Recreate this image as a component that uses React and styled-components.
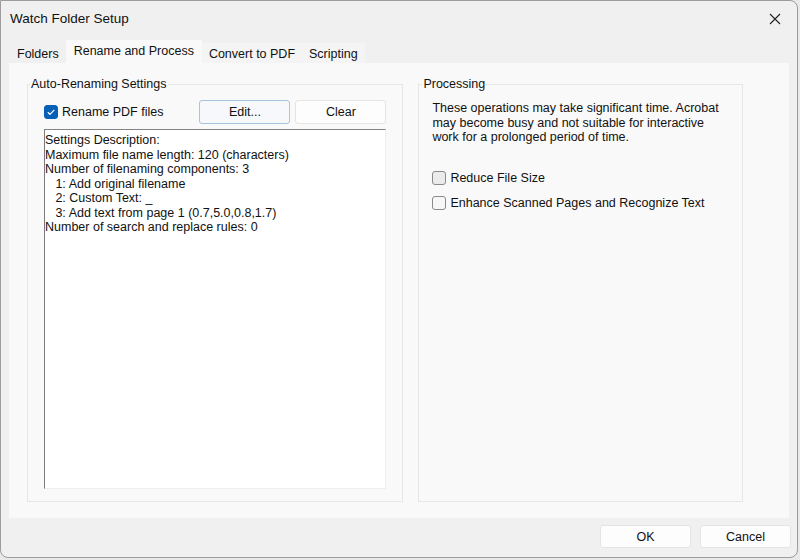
import React from 'react';
import styled, { createGlobalStyle } from 'styled-components';

const GlobalStyle = createGlobalStyle`
  html, body { margin: 0; padding: 0; background: #e9e9e9; }
  body { font-family: "Liberation Sans", Arial, sans-serif; color: #111; }
  * { box-sizing: border-box; }
`;

const Window = styled.div`
  width: 798px;
  height: 558px;
  background: #f0f0f0;
  border: 1px solid #9c9c9c;
  border-radius: 0 8px 8px 8px;
  display: flex;
  flex-direction: column;
  overflow: hidden;
`;

const TitleBar = styled.div`
  height: 39px;
  display: flex;
  align-items: center;
  justify-content: space-between;
  padding: 0 10px 4px 9px;
  font-size: 13.5px;
`;

const CloseButton = styled.div`
  width: 20px;
  height: 20px;
  display: flex;
  align-items: center;
  justify-content: center;
  margin-right: 2px;
`;

const TabStrip = styled.div`
  display: flex;
  align-items: flex-end;
  height: 23px;
  padding-left: 9px;
`;

const Tab = styled.div`
  height: ${p => (p.$active ? '23px' : '20px')};
  padding: ${p => (p.$active ? '4px 8px 0' : '4px 7px 0')};
  font-size: 12.5px;
  line-height: 14px;
  background: ${p => (p.$active ? '#f9f9f9' : p.$light ? '#f4f4f4' : '#f0f0f0')};
  white-space: nowrap;
`;

const Panel = styled.div`
  flex: 1;
  margin: 0 8px;
  background: #f9f9f9;
  display: flex;
  gap: 15px;
  padding: 14px 46px 16px 18px;
`;

const Group = styled.fieldset`
  margin: 0;
  width: ${p => p.$width}px;
  border: 1px solid #e6e6e6;
  padding: 0;
  display: flex;
  flex-direction: column;
  min-width: 0;
`;

const Legend = styled.legend`
  font-size: 12.5px;
  line-height: 15px;
  padding: 0 1px;
  margin-left: ${p => p.$offset}px;
  color: #111;
`;

const GroupBody = styled.div`
  flex: 1;
  display: flex;
  flex-direction: column;
  padding: ${p => p.$pad};
`;

const TopRow = styled.div`
  display: flex;
  align-items: center;
  height: 24px;
  margin-bottom: 5px;
`;

const CheckLabel = styled.label`
  display: flex;
  align-items: center;
  gap: 4px;
  font-size: 12.5px;
  height: 16px;
  flex: ${p => (p.$grow ? 1 : 'none')};
  margin-top: ${p => p.$mt || 0}px;
`;

const Box = styled.span`
  width: 14px;
  height: 14px;
  border-radius: 3px;
  display: inline-flex;
  align-items: center;
  justify-content: center;
  background: ${p => (p.$checked ? '#0560b6' : p.$shade ? '#ebebeb' : '#f7f7f7')};
  border: 1px solid ${p => (p.$checked ? '#0560b6' : '#8a8a8a')};
`;

const Button = styled.button`
  width: 91px;
  height: ${p => p.$h || 24}px;
  margin-left: ${p => p.$ml || 0}px;
  font-family: inherit;
  font-size: 12.5px;
  color: #111;
  background: ${p => (p.$default ? '#f6f8fb' : '#fdfdfd')};
  border: 1px solid ${p => (p.$default ? '#a9c3dd' : '#e4e4e4')};
  border-radius: 3px;
  padding: 0;
`;

const TextArea = styled.div`
  flex: 1;
  background: #fff;
  border-top: 1px solid #838383;
  border-left: 1px solid #7a7a7a;
  border-right: 1px solid #eeeeee;
  border-bottom: 1px solid #eeeeee;
  padding: 3px 1px 2px 0;
  font-size: 12.5px;
  line-height: 14.5px;
  white-space: pre;
`;

const Note = styled.p`
  margin: 9px 0 25px;
  font-size: 12.5px;
  line-height: 14.5px;
  white-space: nowrap;
`;

const Footer = styled.div`
  height: 39px;
  display: flex;
  justify-content: flex-end;
  align-items: center;
  gap: 9px;
  padding: 0 6px 2px 0;
`;

const description = [
  'Settings Description:',
  'Maximum file name length: 120 (characters)',
  'Number of filenaming components: 3',
  '   1: Add original filename',
  '   2: Custom Text: _',
  '   3: Add text from page 1 (0.7,5.0,0.8,1.7)',
  'Number of search and replace rules: 0',
];

const Check = () => (
  <svg width="10" height="10" viewBox="0 0 10 10">
    <path d="M1.8 5.2 L4 7.3 L8.3 2.8" fill="none" stroke="#fff" strokeWidth="1.2" />
  </svg>
);

export default function App() {
  return (
    <>
      <GlobalStyle />
      <Window>
        <TitleBar>
          <span>Watch Folder Setup</span>
          <CloseButton>
            <svg width="12" height="12" viewBox="0 0 12 12">
              <path d="M1 1 L11 11 M11 1 L1 11" stroke="#222" strokeWidth="1.1" />
            </svg>
          </CloseButton>
        </TitleBar>
        <TabStrip>
          <Tab>Folders</Tab>
          <Tab $active>Rename and Process</Tab>
          <Tab $light>Convert to PDF</Tab>
          <Tab $light>Scripting</Tab>
        </TabStrip>
        <Panel>
          <Group $width={378}>
            <Legend $offset={2}>Auto-Renaming Settings</Legend>
            <GroupBody $pad="8px 16px 12px 16px">
              <TopRow>
                <CheckLabel $grow>
                  <Box $checked><Check /></Box>
                  Rename PDF files
                </CheckLabel>
                <Button $default>Edit...</Button>
                <Button $ml={5}>Clear</Button>
              </TopRow>
              <TextArea>{description.join('\n')}</TextArea>
            </GroupBody>
          </Group>
          <Group $width={326}>
            <Legend $offset={3}>Processing</Legend>
            <GroupBody $pad="0 12px 12px 13px">
              <Note>
                These operations may take significant time. Acrobat<br />
                may become busy and not suitable for interactive<br />
                work for a prolonged period of time.
              </Note>
              <CheckLabel>
                <Box $shade />
                Reduce File Size
              </CheckLabel>
              <CheckLabel $mt={9}>
                <Box />
                Enhance Scanned Pages and Recognize Text
              </CheckLabel>
            </GroupBody>
          </Group>
        </Panel>
        <Footer>
          <Button $h={23}>OK</Button>
          <Button $h={23}>Cancel</Button>
        </Footer>
      </Window>
    </>
  );
}
